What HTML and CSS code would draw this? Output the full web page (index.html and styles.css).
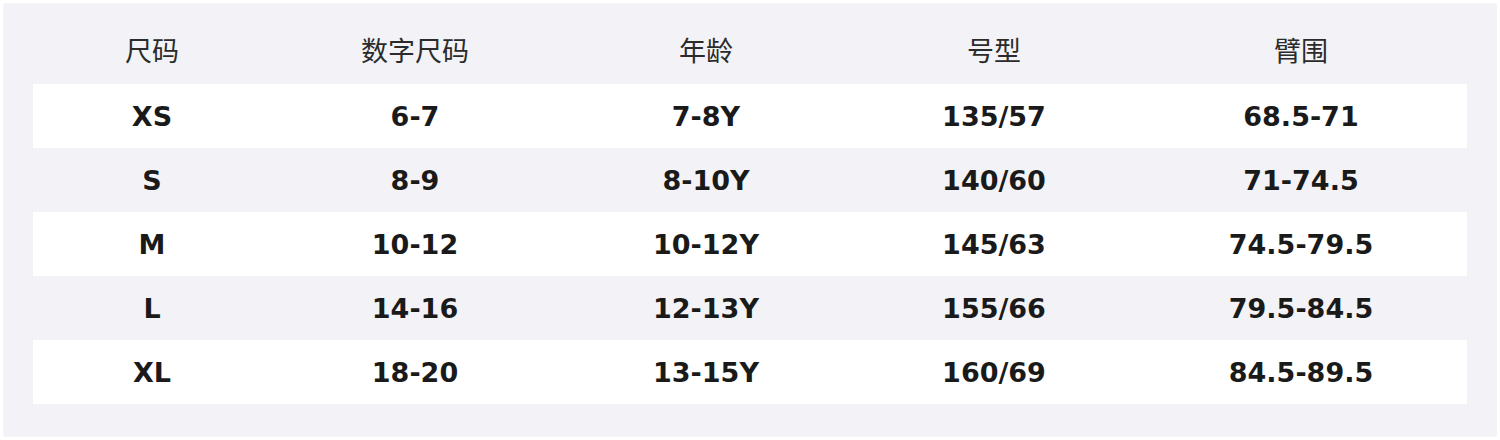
FILE: index.html
```html
<!DOCTYPE html>
<html lang="zh">
<head>
<meta charset="utf-8">
<link rel="stylesheet" href="styles.css">
</head>
<body>
<div class="panel">
  <div class="row head">
    <div class="cell">尺码</div>
    <div class="cell">数字尺码</div>
    <div class="cell">年龄</div>
    <div class="cell">号型</div>
    <div class="cell">臂围</div>
  </div>
  <div class="row body odd">
    <div class="cell">XS</div><div class="cell">6-7</div><div class="cell">7-8Y</div><div class="cell">135/57</div><div class="cell">68.5-71</div>
  </div>
  <div class="row body">
    <div class="cell">S</div><div class="cell">8-9</div><div class="cell">8-10Y</div><div class="cell">140/60</div><div class="cell">71-74.5</div>
  </div>
  <div class="row body odd">
    <div class="cell">M</div><div class="cell">10-12</div><div class="cell">10-12Y</div><div class="cell">145/63</div><div class="cell">74.5-79.5</div>
  </div>
  <div class="row body">
    <div class="cell">L</div><div class="cell">14-16</div><div class="cell">12-13Y</div><div class="cell">155/66</div><div class="cell">79.5-84.5</div>
  </div>
  <div class="row body odd">
    <div class="cell">XL</div><div class="cell">18-20</div><div class="cell">13-15Y</div><div class="cell">160/69</div><div class="cell">84.5-89.5</div>
  </div>
</div>
</body>
</html>
```

FILE: styles.css
```css
html, body {
  margin: 0;
  padding: 0;
  background: #ffffff;
}
body {
  padding: 3px;
}
.panel {
  width: 1494px;
  height: 434px;
  box-sizing: border-box;
  background: #f3f3f7;
  border-radius: 3px;
  padding: 17px 30px 33px;
}
.row {
  display: grid;
  grid-template-columns: 238px 288px 294px 282px 332px;
  height: 64px;
  align-items: center;
}
.cell {
  text-align: center;
}
.head .cell {
  font-family: "Noto Sans CJK SC", "Noto Sans", sans-serif;
  font-size: 27px;
  color: #2b2b2b;
  padding-bottom: 6px;
}
.body .cell {
  font-family: "DejaVu Sans", sans-serif;
  font-weight: bold;
  font-size: 27px;
  color: #1a1a1a;
}
.odd {
  background: #ffffff;
}
```
